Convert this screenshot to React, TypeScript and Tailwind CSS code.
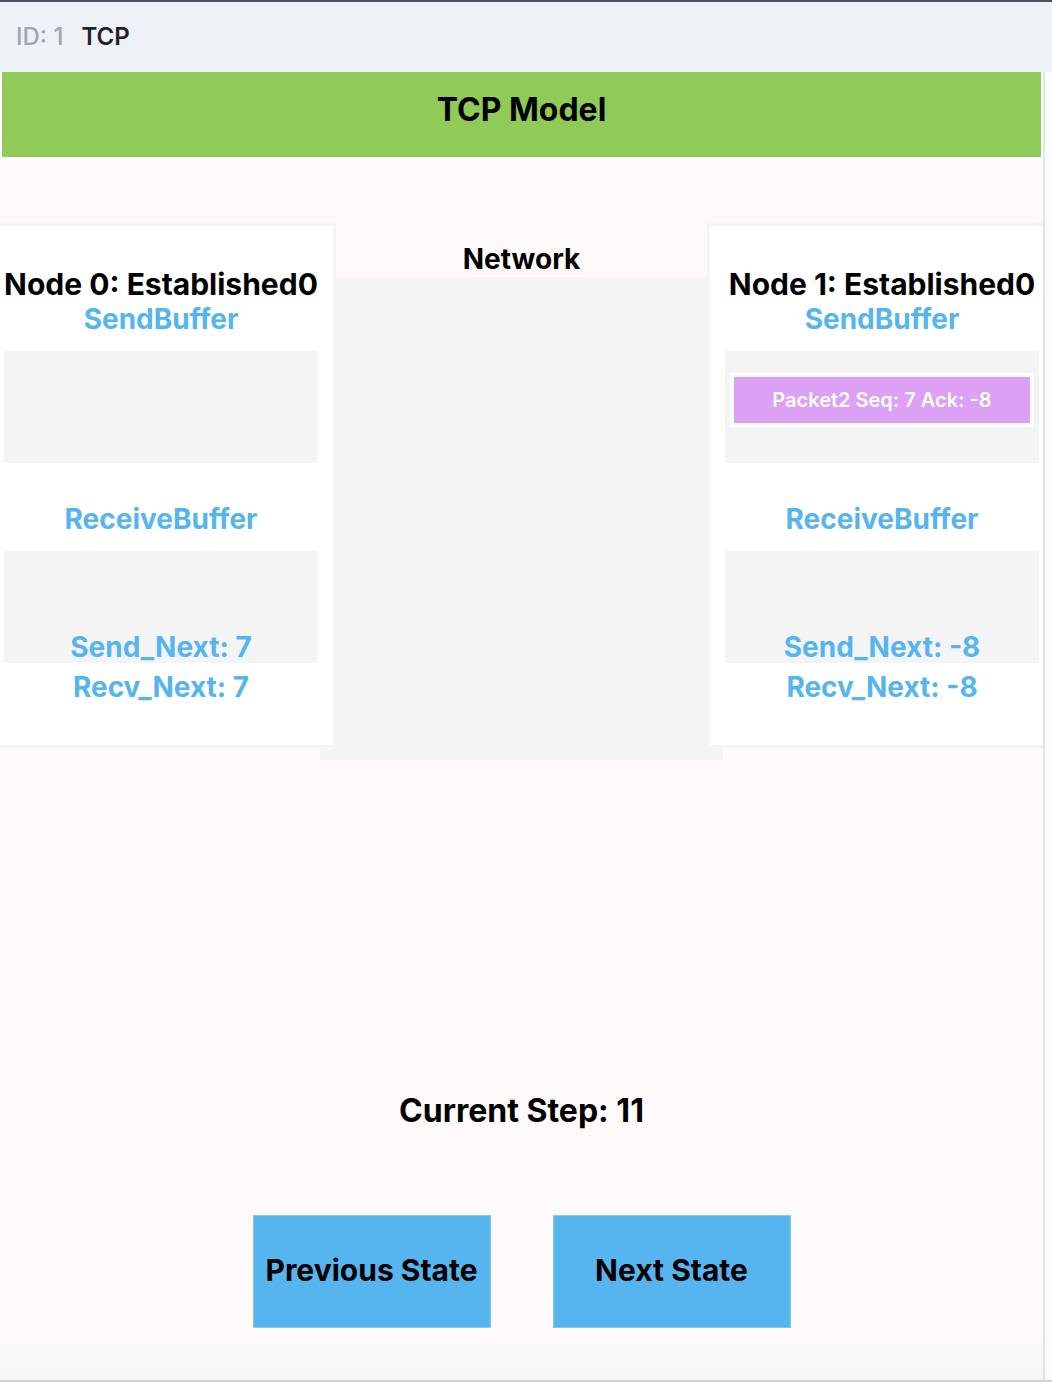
import React from 'react'

type NodeProps = {
    id: number
    state: string
    sendNext: number
    recvNext: number
    sendPackets: string[]
}

const NodeCard = ({ id, state, sendNext, recvNext, sendPackets }: NodeProps) => {
    return (
        <div className="relative z-10 shrink-0 w-[350px] bg-white border-[3px] border-[#f5f4f4] px-[15px] pt-[41px] pb-[41px] flex flex-col items-center text-center">
            <h2 className="text-[30px] leading-[34px] font-bold text-black whitespace-nowrap">
                Node {id}: {state}
            </h2>
            <div className="mt-[1px] text-[28px] leading-[34px] font-bold text-[#56b4ef]">SendBuffer</div>
            <div className="mt-[15px] w-full h-[112px] bg-[#f4f4f4] flex flex-col">
                {sendPackets.map((p) => (
                    <div
                        key={p}
                        className="mx-[5px] mt-[22px] h-[54px] border-4 border-white bg-[#dca0f4] flex items-center justify-center text-white font-semibold text-[20px]"
                    >
                        {p}
                    </div>
                ))}
            </div>
            <div className="mt-[39px] text-[28px] leading-[34px] font-bold text-[#56b4ef]">ReceiveBuffer</div>
            <div className="mt-[15px] w-full h-[112px] bg-[#f4f4f4]" />
            <div className="relative -mt-[33px] text-[28px] leading-[34px] font-bold text-[#56b4ef]">
                Send_Next: {sendNext}
            </div>
            <div className="mt-[6px] text-[28px] leading-[34px] font-bold text-[#56b4ef]">
                Recv_Next: {recvNext}
            </div>
        </div>
    )
}

export default function App() {
    return (
        <div className="w-[1052px] h-[1382px] bg-white font-['Inter',sans-serif] border-t-2 border-b-2 border-t-[#4b5260] border-b-[#cbd3df] flex flex-col">
            {/* header */}
            <div className="h-[70px] shrink-0 bg-[#eef1f6] flex items-center px-4 gap-[18px] text-[24px]">
                <span className="font-medium text-[#a1a6b0]">ID: 1</span>
                <span className="font-semibold text-[#1e222c]">TCP</span>
            </div>

            <div className="flex flex-1 bg-[#fafbfc]">
                <div className="w-[1045px] border-r-2 border-[#dfe3ea] overflow-hidden bg-white flex flex-col">
                    <div className="px-[2px] pb-[3px]">
                        <div className="h-[85px] pb-[10px] bg-[#90cb57] flex items-center justify-center text-[32px] font-bold text-black">
                            TCP Model
                        </div>
                    </div>

                    <div className="flex-1 bg-[linear-gradient(to_bottom,#fefaf9_0%,#fefaf9_96%,#f7f5f5_100%)] pt-[63px] flex flex-col items-center">
                        <div className="w-full flex justify-center items-start">
                            <NodeCard
                                id={0}
                                state="Established0"
                                sendNext={7}
                                recvNext={7}
                                sendPackets={[]}
                            />
                            <div className="shrink-0 w-[403px] -mx-[16px] flex flex-col">
                                <div className="pt-[19px] pb-[1px] text-[28px] leading-[34px] font-bold text-center text-black">
                                    Network
                                </div>
                                <div className="h-[483px] bg-[#f4f4f4]" />
                            </div>
                            <NodeCard
                                id={1}
                                state="Established0"
                                sendNext={-8}
                                recvNext={-8}
                                sendPackets={['Packet2 Seq: 7 Ack: -8']}
                            />
                        </div>

                        <div className="mt-[331px] text-[32px] leading-[40px] font-bold text-black">Current Step: 11</div>

                        <div className="mt-[84px] flex gap-[62px]">
                            <button className="w-[238px] h-[113px] pb-[2px] bg-[#56b4ee] border border-[#80c6f2] text-[30px] font-bold text-black">
                                Previous State
                            </button>
                            <button className="w-[238px] h-[113px] pb-[2px] bg-[#56b4ee] border border-[#80c6f2] text-[30px] font-bold text-black">
                                Next State
                            </button>
                        </div>
                    </div>
                </div>
            </div>
        </div>
    )
}
